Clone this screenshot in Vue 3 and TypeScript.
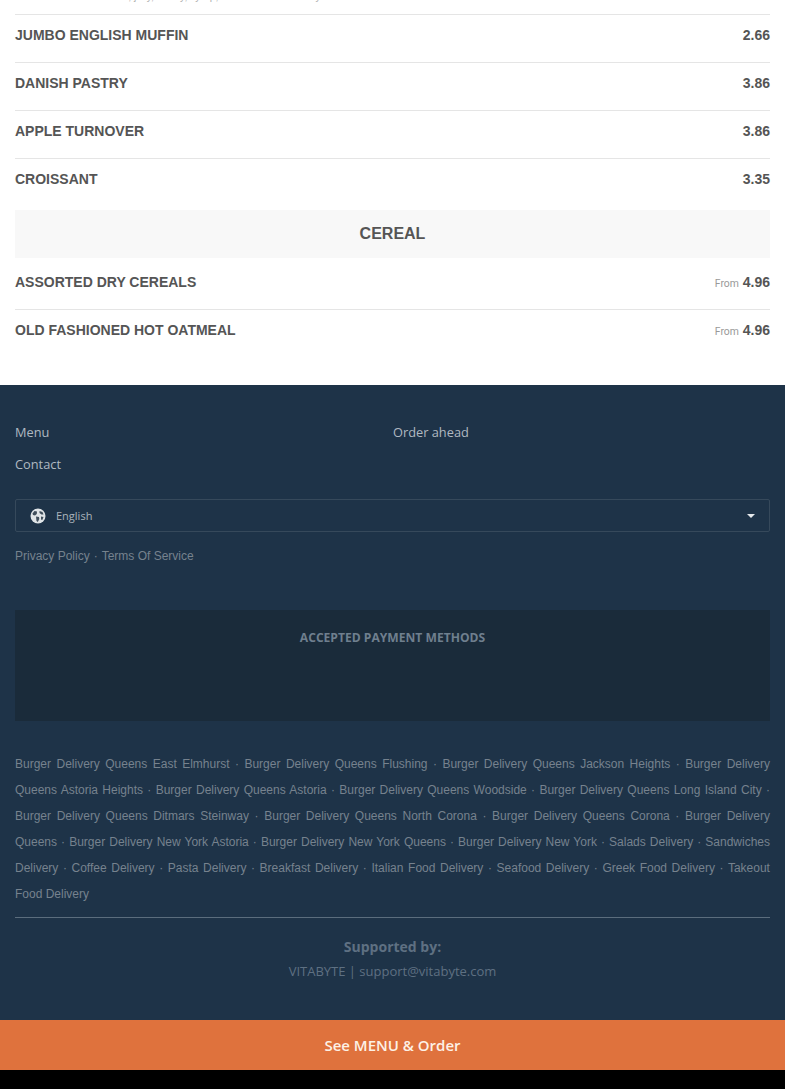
<script setup lang="ts">
const items = [
  { name: 'JUMBO ENGLISH MUFFIN', price: '2.66' },
  { name: 'DANISH PASTRY', price: '3.86' },
  { name: 'APPLE TURNOVER', price: '3.86' },
  { name: 'CROISSANT', price: '3.35' },
]
const cereals = [
  { name: 'ASSORTED DRY CEREALS', price: '4.96' },
  { name: 'OLD FASHIONED HOT OATMEAL', price: '4.96' },
]
const links = [
  'Burger Delivery Queens East Elmhurst', 'Burger Delivery Queens Flushing', 'Burger Delivery Queens Jackson Heights',
  'Burger Delivery Queens Astoria Heights', 'Burger Delivery Queens Astoria', 'Burger Delivery Queens Woodside',
  'Burger Delivery Queens Long Island City', 'Burger Delivery Queens Ditmars Steinway', 'Burger Delivery Queens North Corona',
  'Burger Delivery Queens Corona', 'Burger Delivery Queens', 'Burger Delivery New York Astoria', 'Burger Delivery New York Queens',
  'Burger Delivery New York', 'Salads Delivery', 'Sandwiches Delivery', 'Coffee Delivery', 'Pasta Delivery', 'Breakfast Delivery',
  'Italian Food Delivery', 'Seafood Delivery', 'Greek Food Delivery', 'Takeout Food Delivery',
]
</script>

<template>
  <div class="page">
    <main class="menu">
      <p class="clipped">Served with butter, jelly, honey, syrup, or cream cheese only</p>
      <div v-for="item in items" :key="item.name" class="row">
        <span class="name">{{ item.name }}</span>
        <span class="price">{{ item.price }}</span>
      </div>
      <h2 class="category">CEREAL</h2>
      <div class="cereals">
        <div v-for="item in cereals" :key="item.name" class="row">
          <span class="name">{{ item.name }}</span>
          <span class="price"><small>From</small> {{ item.price }}</span>
        </div>
      </div>
    </main>
    <footer class="footer">
      <nav class="nav">
        <a>Menu</a>
        <a>Order ahead</a>
        <a>Contact</a>
      </nav>
      <div class="lang">
        <svg class="globe" width="16" height="16" viewBox="0 0 16 16" aria-hidden="true">
          <circle cx="8" cy="8" r="7.5" fill="#dfe4e7" />
          <path d="M2.5 5.5 4.5 3 7 3.5 6.8 6 5 7.5 3 7zM9.5 3 12.5 4 13.5 6.5 11.5 6.5 9.5 5zM6 8.5 9 9l.3 2L7.8 14 6.5 13zM11 8.5l2.5.5-1.2 3L11 11.5z" fill="#3f4e5b" />
        </svg>
        <span>English</span>
        <i class="caret"></i>
      </div>
      <div class="legal"><a>Privacy Policy</a><span class="sep">·</span><a>Terms Of Service</a></div>
      <section class="payment"><h3>ACCEPTED PAYMENT METHODS</h3></section>
      <p class="links">
        <template v-for="(link, i) in links" :key="link"><a>{{ link }}</a><template v-if="i < links.length - 1"> · </template></template>
      </p>
      <div class="support">
        <strong>Supported by:</strong>
        <span>VITABYTE | support@vitabyte.com</span>
      </div>
    </footer>
    <div class="cta">See MENU &amp; Order</div>
    <div class="blackbar"></div>
  </div>
</template>

<style>
html, body { margin: 0; padding: 0; background: #000; }
</style>

<style scoped>
.page { width: 785px; height: 1089px; overflow: hidden; background: #fff; display: flex; flex-direction: column; }
.menu { flex: none; padding: 0 15px; height: 395px; box-sizing: border-box; background: #fff; margin-top: -10px; }
.clipped { margin: 0; height: 24px; font: 10.4px/14px "Liberation Sans", Arial, sans-serif; color: #b0b0b0; border-bottom: 1px solid #e5e5e5; padding-left: 30px; }
.row { display: flex; justify-content: space-between; height: 47px; border-bottom: 1px solid #e5e5e5; font: bold 14px/40px "Liberation Sans", Arial, sans-serif; color: #555; }
.row:has(+ .category) { border-bottom: 0; }
.cereals { margin-top: 4px; }
.cereals .row:last-child { border-bottom: 0; }
.price small { font: 10.4px "Roboto", sans-serif; color: #999; }
.category { margin: 4px 0 0; height: 48px; background: #f8f8f8; text-align: center; font: bold 16px/47px "Liberation Sans", Arial, sans-serif; color: #555; }
.footer { flex: none; background: #1e3348; padding: 0 15px; height: 635px; box-sizing: border-box; }
.nav { display: grid; grid-template-columns: 378px 1fr; padding-top: 31px; font: 12.8px/32px "Open Sans", sans-serif; color: #b0b9c1; }
.lang { margin-top: 19px; height: 33px; box-sizing: border-box; border: 1px solid #36495b; border-radius: 2px; display: flex; align-items: center; padding: 0 14px; font: 11px "Open Sans", sans-serif; color: #aab3bb; }
.globe { margin-right: 10px; }
.caret { margin-left: auto; border: 4px solid transparent; border-top-color: #e6e9ec; border-bottom: 0; }
.legal { margin-top: 16px; font: 12px/16px "Liberation Sans", Arial, sans-serif; color: #76828e; }
.sep { margin: 0 4px; }
.payment { margin-top: 46px; height: 111px; background: #1a2b3a; text-align: center; overflow: hidden; }
.payment h3 { margin: 20px 0 0; font: bold 12.1px/16px "Open Sans", sans-serif; color: #6f7f8e; }
.links { margin: 30px 0 0; padding-bottom: 10px; text-align: justify; font: 12px/26px "Liberation Sans", Arial, sans-serif; color: #76828e; border-bottom: 1px solid #5b6d7d; }
.support { display: flex; flex-direction: column; text-align: center; margin-top: 17px; font: 13px/24px "Open Sans", sans-serif; color: #5e7082; }
.support strong { font-size: 14px; }
.cta { flex: none; height: 50px; background: #df723d; color: #fdf1e6; text-align: center; font: 600 15px/50px "Open Sans", sans-serif; }
.blackbar { flex: 1; background: #000; }
</style>
